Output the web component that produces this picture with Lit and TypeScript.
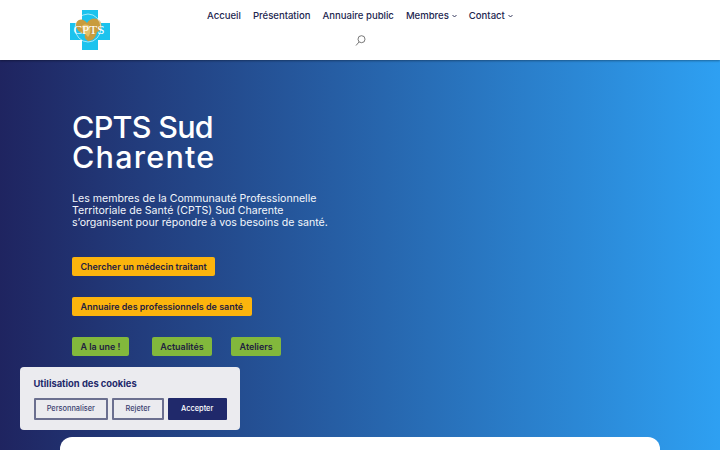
import { LitElement, html, css } from "lit";
import { customElement } from "lit/decorators.js";

@customElement("app-root")
export class AppRoot extends LitElement {
  static styles = css`
    :host { display: block; width: 720px; height: 450px; overflow: hidden; position: relative; font-family: Inter, "Noto Sans", sans-serif; }
    .header { height: 60px; background: #fff; display: flex; padding-left: 70px; box-sizing: border-box; position: relative; z-index: 1; box-shadow: 0 1px 2px rgba(0,0,0,.35); }
    .logo { margin-top: 10px; width: 40px; height: 40px; display: block; flex: none; }
    .navwrap { flex: none; width: 320px; margin-left: 97px; display: flex; flex-direction: column; align-items: flex-start; }
    .nav { display: flex; gap: 12px; padding-top: 9px; height: 13px; align-items: center; font-size: 9.55px; font-weight: 500; color: #22264f; white-space: nowrap; line-height: 13px; }
    .nav span { display: inline-flex; align-items: center; gap: 3px; }
    .chev { width: 5px; height: 4px; display: block; }
    .search { display: block; width: 11px; height: 11px; margin: 13px 0 0 148px; }
    .hero { height: 390px; background: linear-gradient(90deg, #1f2460 0%, #2ea0f2 100%); padding: 52px 0 0 72px; box-sizing: border-box; color: #fff; position: relative; }
    h1 { margin: 0; font-size: 30.5px; line-height: 30px; font-weight: 500; }
    h1 span { display: block; }
    .l1 { letter-spacing: -.7px; }
    .l2 { letter-spacing: 1.25px; }
    p { margin: 20.5px 0 0; font-size: 10.6px; line-height: 12px; font-weight: 400; color: #f2f6fb; white-space: nowrap; }
    .btn { display: inline-block; height: 19px; line-height: 19px; padding: 0 8.5px; font-size: 8.95px; font-weight: 600; color: #1f2040; border-radius: 2px; white-space: nowrap; box-sizing: content-box; }
    .gold { background: #fcb40d; }
    .green { background: #82b83c; }
    .stack { display: flex; flex-direction: column; align-items: flex-start; gap: 21px; margin-top: 28.5px; }
    .row { display: flex; gap: 23px; }
    .row .btn:last-child { margin-left: -4px; }
    .card { position: absolute; left: 60px; top: 377px; width: 600px; height: 40px; background: #fff; border-radius: 12px 12px 0 0; }
    .cookie { position: absolute; left: 20px; top: 367px; width: 220px; height: 63px; background: #ebebef; border-radius: 4px; padding: 10px 13.5px 0; box-sizing: border-box; color: #22296a; }
    .cookie h2 { margin: 0; font-size: 9.4px; line-height: 13px; font-weight: 700; }
    .actions { display: flex; gap: 4px; margin-top: 8px; }
    .actions button { height: 22px; margin: 0; padding: 0; box-sizing: border-box; font: 500 7.4px/1 Inter, sans-serif; border-radius: 1px; border: 2px solid #6b6f8f; background: #ebebef; color: #3a3f70; }
    .b1 { width: 75px; } .b2 { width: 52px; } .b3 { width: 59px; background: #20296b !important; border-color: #20296b !important; color: #fff !important; }
  `;

  render() {
    const chev = html`<svg class="chev" viewBox="0 0 5 4"><path d="M.5 1 2.5 3 4.5 1" fill="none" stroke="#22264f" stroke-width=".9"/></svg>`;
    return html`
      <div class="header">
        <svg class="logo" viewBox="0 0 40 40">
          <path d="M12 0H28V13H41V30H28V40H12V30H0V13H12Z" fill="#1cc3ee"/>
          <path d="M6 13c3-5 8-4 11 0 3-5 9-6 13-2 3 5 1 10-3 11-1 5-4 9-9 9-3-2-4-4-3-7-5 0-10-6-9-11Z" fill="#c89c3e"/>
          <path d="M12 16c2-2 6-2 8 1 1 4 0 8-2 10-3-3-6-7-6-11Z" fill="#e3bf6a"/>
          <ellipse cx="18" cy="18" rx="13" ry="14" fill="none" stroke="#fff" stroke-width=".6"/>
          <text x="19" y="24" text-anchor="middle" font-family="Liberation Serif, serif" font-size="13" fill="#fff">CPTS</text>
        </svg>
        <div class="navwrap">
          <div class="nav">
            <span>Accueil</span><span>Présentation</span><span>Annuaire public</span>
            <span>Membres ${chev}</span><span>Contact ${chev}</span>
          </div>
          <svg class="search" viewBox="0 0 11 11"><circle cx="6.5" cy="4.2" r="3.5" fill="none" stroke="#555" stroke-width=".8"/><path d="M4 7 1 10.5" stroke="#555" stroke-width=".8"/></svg>
        </div>
      </div>
      <div class="hero">
        <h1><span class="l1">CPTS Sud</span><span class="l2">Charente</span></h1>
        <p>Les membres de la Communauté Professionnelle<br />Territoriale de Santé (CPTS) Sud Charente<br />s’organisent pour répondre à vos besoins de santé.</p>
        <div class="stack">
          <span class="btn gold">Chercher un médecin traitant</span>
          <span class="btn gold">Annuaire des professionnels de santé</span>
          <div class="row">
            <span class="btn green">A la une !</span>
            <span class="btn green">Actualités</span>
            <span class="btn green">Ateliers</span>
          </div>
        </div>
        <div class="card"></div>
      </div>
      <div class="cookie">
        <h2>Utilisation des cookies</h2>
        <div class="actions">
          <button class="b1">Personnaliser</button>
          <button class="b2">Rejeter</button>
          <button class="b3">Accepter</button>
        </div>
      </div>
    `;
  }
}
